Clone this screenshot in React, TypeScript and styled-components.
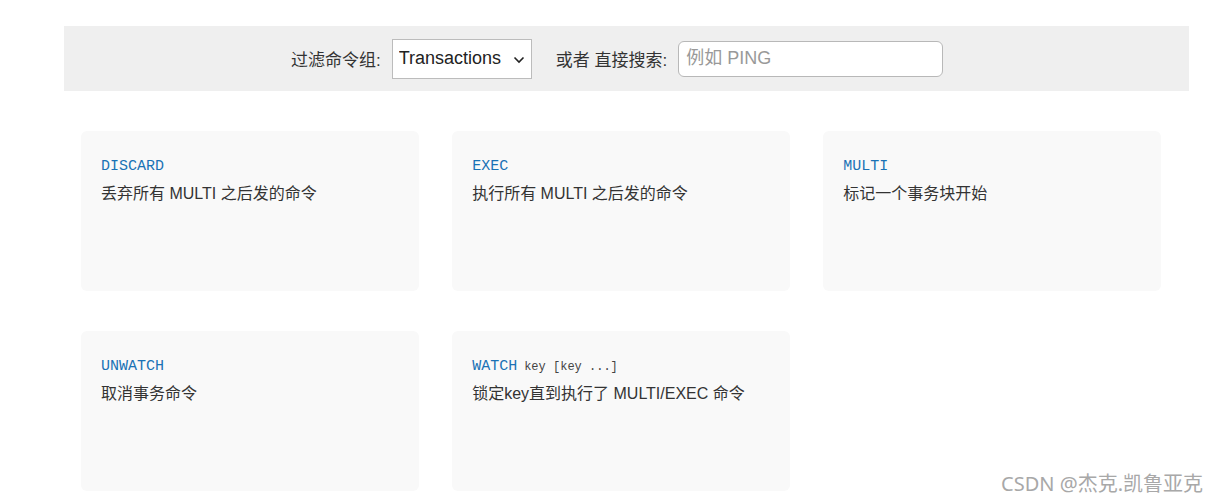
import React from "react";
import styled, { createGlobalStyle } from "styled-components";

type Command = {
    name: string;
    args?: string;
    summary: string;
};

const commands: Command[] = [
    { name: "DISCARD", summary: "丢弃所有 MULTI 之后发的命令" },
    { name: "EXEC", summary: "执行所有 MULTI 之后发的命令" },
    { name: "MULTI", summary: "标记一个事务块开始" },
    { name: "UNWATCH", summary: "取消事务命令" },
    { name: "WATCH", args: "key [key ...]", summary: "锁定key直到执行了 MULTI/EXEC 命令" },
];

const GlobalStyle = createGlobalStyle`
    html, body {
        margin: 0;
        background: #ffffff;
        font-family: "Liberation Sans", "Noto Sans CJK SC", Arial, sans-serif;
        color: #333333;
    }
`;

const CommandCard: React.FunctionComponent<{ command: Command }> = ({ command }) => (
    <Card>
        <Signature>
            <Name>{command.name}</Name>
            {command.args && <Args>{command.args}</Args>}
        </Signature>
        <Summary>{command.summary}</Summary>
    </Card>
);

export default function App() {
    return (
        <Page>
            <GlobalStyle />
            <FilterBar>
                <Label>过滤命令组:</Label>
                <SelectWrap>
                    <Select defaultValue="transactions">
                        <option value="transactions">Transactions</option>
                    </Select>
                    <Chevron width="12" height="8" viewBox="0 0 12 8">
                        <path d="M1.5 1.5 L6 6 L10.5 1.5" fill="none" stroke="#222" strokeWidth="1.6" />
                    </Chevron>
                </SelectWrap>
                <Label $spaced>或者 直接搜索:</Label>
                <Search placeholder="例如 PING" />
            </FilterBar>
            <Grid>
                {commands.map(c => (
                    <CommandCard key={c.name} command={c} />
                ))}
            </Grid>
            <Watermark>CSDN @杰克.凯鲁亚克</Watermark>
        </Page>
    );
}

const Page = styled.div`
    position: relative;
    width: 1218px;
    height: 502px;
    padding: 26px 0 0 64px;
    box-sizing: border-box;
    overflow: hidden;
`;

const FilterBar = styled.div`
    width: 1125px;
    height: 65px;
    background-color: #efefef;
    display: flex;
    align-items: center;
    padding-left: 227px;
    box-sizing: border-box;
`;

const Label = styled.span<{ $spaced?: boolean }>`
    font-size: 17px;
    color: #333333;
    margin-left: ${props => (props.$spaced ? "24px" : "0")};
    margin-right: 11px;
`;

const SelectWrap = styled.div`
    position: relative;
    width: 140px;
    height: 40px;
`;

const Select = styled.select`
    appearance: none;
    width: 100%;
    height: 100%;
    border: 1px solid #bcbcbc;
    border-radius: 0;
    background: #ffffff;
    padding: 0 0 2px 6px;
    font-family: "Liberation Sans", Arial, sans-serif;
    font-size: 18px;
    color: #222222;
    outline: none;
`;

const Chevron = styled.svg`
    position: absolute;
    right: 7px;
    top: 17px;
    pointer-events: none;
`;

const Search = styled.input`
    width: 265px;
    height: 36px;
    box-sizing: border-box;
    border: 1px solid #b8b8b8;
    border-radius: 6px;
    background: #ffffff;
    padding: 0 7px;
    font-family: "Liberation Sans", "Noto Sans CJK SC", sans-serif;
    font-size: 18px;
    outline: none;

    &::placeholder {
        color: #999999;
    }
`;

const Grid = styled.div`
    display: grid;
    grid-template-columns: repeat(3, 1fr);
    column-gap: 33.5px;
    row-gap: 40px;
    width: 1080px;
    margin: 40px 0 0 17px;
`;

const Card = styled.div`
    height: 160px;
    background-color: #f9f9f9;
    border-radius: 6px;
    padding: 25px 20px 0;
    box-sizing: border-box;
`;

const Signature = styled.div`
    display: flex;
    align-items: baseline;
    gap: 7px;
    height: 22px;
    line-height: 22px;
`;

const Name = styled.span`
    font-family: "Liberation Mono", "Courier New", monospace;
    font-size: 15px;
    color: #1a72b5;
`;

const Args = styled.span`
    font-family: "Liberation Mono", "Courier New", monospace;
    font-size: 12px;
    color: #444444;
`;

const Summary = styled.div`
    margin-top: 5px;
    line-height: 22px;
    font-size: 16px;
    color: #333333;
`;

const Watermark = styled.div`
    position: absolute;
    right: 15px;
    bottom: 5px;
    font-family: "Noto Sans", "Noto Sans CJK SC", sans-serif;
    font-size: 20px;
    color: #a8a8a8;
`;
